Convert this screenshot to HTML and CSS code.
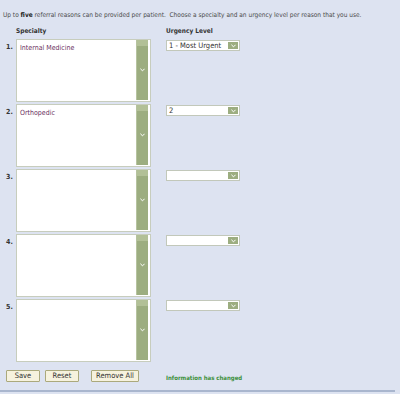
FILE: index.html
```html
<!DOCTYPE html>
<html lang="en">
  <head>
    <meta charset="utf-8" />
    <title>Referral Reasons</title>
    <link rel="stylesheet" href="styles.css">
  </head>
  <body>
    <div class="panel">
      <p class="intro">
        Up to <strong>five</strong> referral reasons can be provided per patient.&nbsp; Choose a specialty and an urgency level per reason that you use.
      </p>
      <div class="grid">
        <div></div>
        <div class="head">Specialty</div>
        <div class="head">Urgency Level</div>

        <div class="num">1.</div>
        <div class="list">
          <div class="list-text">Internal Medicine</div>
          <div class="scroll"><span class="thumb"></span><svg viewBox="0 0 6 4" class="chev"><path d="M0.5 0.5 L3 3 L5.5 0.5" /></svg></div>
        </div>
        <div class="select"><span class="value">1 - Most Urgent</span><span class="btn"><svg viewBox="0 0 6 4" class="chev"><path d="M0.5 0.5 L3 3 L5.5 0.5" /></svg></span></div>

        <div class="num">2.</div>
        <div class="list">
          <div class="list-text">Orthopedic</div>
          <div class="scroll"><span class="thumb"></span><svg viewBox="0 0 6 4" class="chev"><path d="M0.5 0.5 L3 3 L5.5 0.5" /></svg></div>
        </div>
        <div class="select"><span class="value">2</span><span class="btn"><svg viewBox="0 0 6 4" class="chev"><path d="M0.5 0.5 L3 3 L5.5 0.5" /></svg></span></div>

        <div class="num">3.</div>
        <div class="list">
          <div class="list-text"></div>
          <div class="scroll"><span class="thumb"></span><svg viewBox="0 0 6 4" class="chev"><path d="M0.5 0.5 L3 3 L5.5 0.5" /></svg></div>
        </div>
        <div class="select"><span class="value"></span><span class="btn"><svg viewBox="0 0 6 4" class="chev"><path d="M0.5 0.5 L3 3 L5.5 0.5" /></svg></span></div>

        <div class="num">4.</div>
        <div class="list">
          <div class="list-text"></div>
          <div class="scroll"><span class="thumb"></span><svg viewBox="0 0 6 4" class="chev"><path d="M0.5 0.5 L3 3 L5.5 0.5" /></svg></div>
        </div>
        <div class="select"><span class="value"></span><span class="btn"><svg viewBox="0 0 6 4" class="chev"><path d="M0.5 0.5 L3 3 L5.5 0.5" /></svg></span></div>

        <div class="num">5.</div>
        <div class="list">
          <div class="list-text"></div>
          <div class="scroll"><span class="thumb"></span><svg viewBox="0 0 6 4" class="chev"><path d="M0.5 0.5 L3 3 L5.5 0.5" /></svg></div>
        </div>
        <div class="select"><span class="value"></span><span class="btn"><svg viewBox="0 0 6 4" class="chev"><path d="M0.5 0.5 L3 3 L5.5 0.5" /></svg></span></div>
      </div>
      <div class="actions">
        <button class="button save">Save</button>
        <button class="button reset">Reset</button>
        <button class="button remove">Remove All</button>
        <span class="status">Information has changed</span>
      </div>
    </div>
  </body>
</html>
```

FILE: styles.css
```css
body {
  margin: 0;
  background-color: #dde3f1;
  font-family: "DejaVu Sans", Verdana, sans-serif;
  font-stretch: condensed;
  font-size: 6.5px;
  color: #333;
}
.panel {
  width: 395px;
  height: 390px;
  border-bottom: 2px solid #a9b6ce;
}
.intro {
  margin: 0;
  padding: 11px 0 0 3px;
  line-height: 8px;
  white-space: nowrap;
  color: #4a4a4a;
}
.intro strong {
  color: #222;
}
.grid {
  display: grid;
  grid-template-columns: 16px 150px 74px;
  row-gap: 2px;
  margin-top: 8px;
}
.head {
  font-weight: bold;
  height: 10px;
  line-height: 8px;
  color: #333;
}
.num {
  font-weight: bold;
  padding: 4px 0 0 6px;
  font-size: 7px;
}
.list {
  display: flex;
  width: 135px;
  height: 63px;
  box-sizing: border-box;
  border: 1px solid #c7cdbd;
  background-color: #fff;
}
.list-text {
  flex: 1;
  padding: 4px 0 0 3px;
  font-size: 7px;
  color: #6b2f5e;
}
.scroll {
  position: relative;
  width: 11px;
  margin: 0 2px 1px 0;
  background-color: #9cad80;
  display: flex;
  align-items: center;
  justify-content: center;
  border-left: 1px solid #b6c39f;
}
.thumb {
  position: absolute;
  top: 0;
  left: 0;
  right: 0;
  height: 6px;
  background-color: #b2c097;
}
.chev {
  width: 5px;
  height: 4px;
  fill: none;
  stroke: #fff;
  stroke-width: 1.2;
}
.select {
  display: flex;
  align-self: start;
  margin-top: 1px;
  height: 11px;
  box-sizing: border-box;
  border: 1px solid #c2c8ba;
  background-color: #fff;
}
.value {
  flex: 1;
  padding-left: 2px;
  line-height: 9px;
  color: #333;
  font-size: 7.5px;
}
.btn {
  width: 10px;
  margin: 1px;
  background-color: #9cad80;
  display: flex;
  align-items: center;
  justify-content: center;
}
.actions {
  display: flex;
  align-items: center;
  margin-top: 8px;
  padding-left: 6px;
}
.button {
  font-family: inherit;
  font-stretch: condensed;
  font-size: 7.5px;
  height: 12px;
  padding: 0;
  margin: 0 5px 0 0;
  background-color: #f6f2de;
  border: 1px solid #aba97c;
  border-radius: 1px;
  color: #333;
  line-height: 10px;
}
.save,
.reset {
  width: 34px;
}
.remove {
  width: 48px;
  margin-left: 7px;
}
.status {
  margin-left: 22px;
  margin-top: 2px;
  font-size: 6px;
  font-weight: bold;
  color: #3b8f3b;
}
```
